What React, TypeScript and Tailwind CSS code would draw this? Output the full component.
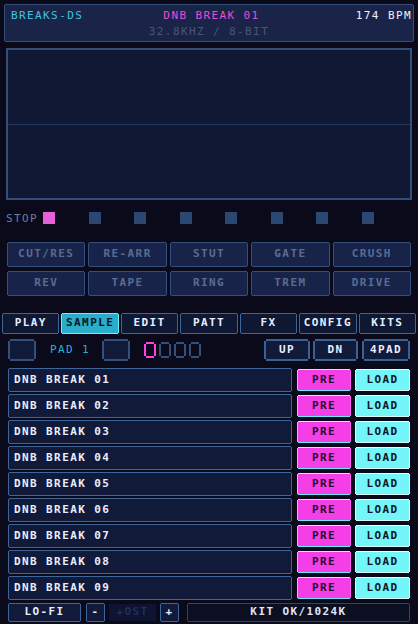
import React from "react";

// 1px / 2px pixel-style outlines with notched corners
const edge = "shadow-[0_-1px_0_#34507a,0_1px_0_#34507a,-1px_0_0_#34507a,1px_0_0_#34507a]";
const edgeBlue = "shadow-[0_-1px_0_#3c659a,0_1px_0_#3c659a,-1px_0_0_#3c659a,1px_0_0_#3c659a]";
const edgeBlue2 = "shadow-[0_-2px_0_#3a6194,0_2px_0_#3a6194,-2px_0_0_#3a6194,2px_0_0_#3a6194]";
const edgeCyan = "shadow-[0_-1px_0_#6bf0ff,0_1px_0_#6bf0ff,-1px_0_0_#6bf0ff,1px_0_0_#6bf0ff]";
const edgePre = "shadow-[0_-1px_0_#a8f4ff,0_1px_0_#6ee8ff,-1px_0_0_#6ee8ff,1px_0_0_#ff5ef0]";
const edgeLoad = "shadow-[0_-1px_0_#e8ffff,0_1px_0_#d8fcff,-1px_0_0_#d8fcff,1px_0_0_#e8ffff]";
const edgeMag2 = "shadow-[0_-2px_0_#ff3fe0,0_2px_0_#ff3fe0,-2px_0_0_#ff3fe0,2px_0_0_#ff3fe0]";
const edgeDim2 = "shadow-[0_-2px_0_#34507a,0_2px_0_#34507a,-2px_0_0_#34507a,2px_0_0_#34507a]";
const edgeKit = "shadow-[0_-1px_0_#2c4670,0_1px_0_#2c4670,-1px_0_0_#2c4670,1px_0_0_#2c4670]";

const FX = [
  ["CUT/RES", "RE-ARR", "STUT", "GATE", "CRUSH"],
  ["REV", "TAPE", "RING", "TREM", "DRIVE"],
];

const TABS = ["PLAY", "SAMPLE", "EDIT", "PATT", "FX", "CONFIG", "KITS"];

const STEPS = [true, false, false, false, false, false, false, false];

const SAMPLES = Array.from({ length: 9 }, (_, i) => `DNB BREAK 0${i + 1}`);

function Header() {
  return (
    <div className={`mx-[5px] mt-[4px] h-[36px] bg-[#1a2448] ${edge} flex flex-col`}>
      <div className="grid grid-cols-[1fr_auto_1fr] pl-[6px] pr-[1px] pt-[5px] h-[16px] leading-[11px]">
        <span className="text-[#3fc4e0]">BREAKS-DS</span>
        <span className="text-[#e84bd8]">DNB BREAK 01</span>
        <span className="text-right text-[#eef2ff]">174 BPM</span>
      </div>
      <div className="mt-[5px] text-center leading-[11px] text-[#4b5672]">32.8KHZ / 8-BIT</div>
    </div>
  );
}

function Scope() {
  return (
    <div className="mx-[6px] mt-[7px] h-[152px] border-2 border-[#34507a] bg-[#111833] flex flex-col justify-center">
      <div className="h-px bg-[#24355e]" />
    </div>
  );
}

function Steps() {
  return (
    <div className="mt-[12px] h-[12px] flex items-center pl-[6px]">
      <span className="w-[37px] text-[#6f7ea6] leading-none">STOP</span>
      <div className="grid grid-cols-[repeat(8,45.5px)]">
        {STEPS.map((on, i) => (
          <div key={i} className={`w-[12px] h-[12px] ${on ? "bg-[#e860d8]" : "bg-[#2c4870]"}`} />
        ))}
      </div>
    </div>
  );
}

function FxPads() {
  return (
    <div className="mt-[19px] mx-[8px] flex flex-col gap-[6px]">
      {FX.map((row, r) => (
        <div key={r} className="grid grid-cols-5 gap-[5px]">
          {row.map((name) => (
            <div
              key={name}
              className={`h-[23px] bg-[#182349] ${edge} flex items-center justify-center font-bold text-[#5a6c92]`}
            >
              {name}
            </div>
          ))}
        </div>
      ))}
    </div>
  );
}

function Tabs() {
  return (
    <div className="mt-[19px] mx-[3px] grid grid-cols-7 gap-[4px]">
      {TABS.map((t) => {
        const active = t === "SAMPLE";
        return (
          <div
            key={t}
            className={`h-[19px] flex items-center justify-center font-bold ${
              active ? `bg-[#29adc9] text-[#0a1426] ${edgeCyan}` : `bg-[#0f1833] text-[#e6eeff] ${edgeBlue}`
            }`}
          >
            {t}
          </div>
        );
      })}
    </div>
  );
}

function PadRow() {
  return (
    <div className="mt-[8px] h-[18px] flex items-center pl-[10px] pr-[10px]">
      <div className={`w-[24px] h-[18px] bg-[#111a38] ${edgeDim2}`} />
      <div className="w-[70px] pl-[16px] text-[#2ab0d8]">PAD 1</div>
      <div className={`w-[24px] h-[18px] bg-[#111a38] ${edgeDim2}`} />
      <div className="ml-[18px] flex gap-[7px]">
        {[0, 1, 2, 3].map((i) => (
          <div key={i} className={`w-[8px] h-[12px] ${i === 0 ? edgeMag2 : edgeDim2}`} />
        ))}
      </div>
      <div className="ml-auto flex">
        <div className={`w-[42px] h-[18px] bg-[#111a38] ${edgeBlue2} flex items-center justify-center font-bold text-[#e6eeff]`}>UP</div>
        <div className={`ml-[7px] w-[41px] h-[18px] bg-[#111a38] ${edgeBlue2} flex items-center justify-center font-bold text-[#e6eeff]`}>DN</div>
        <div className={`ml-[8px] w-[44px] h-[18px] bg-[#111a38] ${edgeBlue2} flex items-center justify-center font-bold text-[#e6eeff]`}>4PAD</div>
      </div>
    </div>
  );
}

function SampleList() {
  return (
    <div className="mt-[10px] ml-[9px] flex flex-col gap-[4px]">
      {SAMPLES.map((s) => (
        <div key={s} className="h-[22px] flex items-center">
          <div className={`w-[282px] h-[22px] bg-[#111a38] ${edgeBlue} flex items-center pl-[5px] font-bold text-[#e8eeff]`}>
            {s}
          </div>
          <div className={`ml-[7px] w-[52px] h-[20px] bg-[#f43ee6] ${edgePre} flex items-center justify-center font-bold text-[#1a0d2a]`}>
            PRE
          </div>
          <div className={`ml-[6px] w-[53px] h-[20px] bg-[#74f6f8] ${edgeLoad} flex items-center justify-center font-bold text-[#0e1426]`}>
            LOAD
          </div>
        </div>
      ))}
    </div>
  );
}

function Footer() {
  return (
    <div className="mt-[5px] ml-[9px] h-[17px] flex font-bold">
      <div className={`w-[71px] bg-[#111a38] ${edgeBlue} flex items-center justify-center text-[#e6eeff]`}>LO-FI</div>
      <div className={`ml-[7px] w-[17px] bg-[#111a38] ${edgeBlue} flex items-center justify-center text-[#e6eeff]`}>-</div>
      <div className="ml-[5px] w-[47px] bg-[#0d1330] flex items-center justify-center text-[#1f3157]">+OST</div>
      <div className={`ml-[5px] w-[17px] bg-[#111a38] ${edgeBlue} flex items-center justify-center text-[#e6eeff]`}>+</div>
      <div className={`ml-[10px] w-[221px] bg-[#0b0f22] ${edgeKit} flex items-center justify-center text-[#e0e6f5]`}>
        KIT OK/1024K
      </div>
    </div>
  );
}

export default function App() {
  return (
    <div className="w-[418px] h-[624px] overflow-hidden bg-[#0a0a1a] font-['DejaVu_Sans_Mono',monospace] text-[11px] tracking-[1.4px] flex flex-col pt-px">
      <Header />
      <Scope />
      <Steps />
      <FxPads />
      <Tabs />
      <PadRow />
      <SampleList />
      <Footer />
    </div>
  );
}
